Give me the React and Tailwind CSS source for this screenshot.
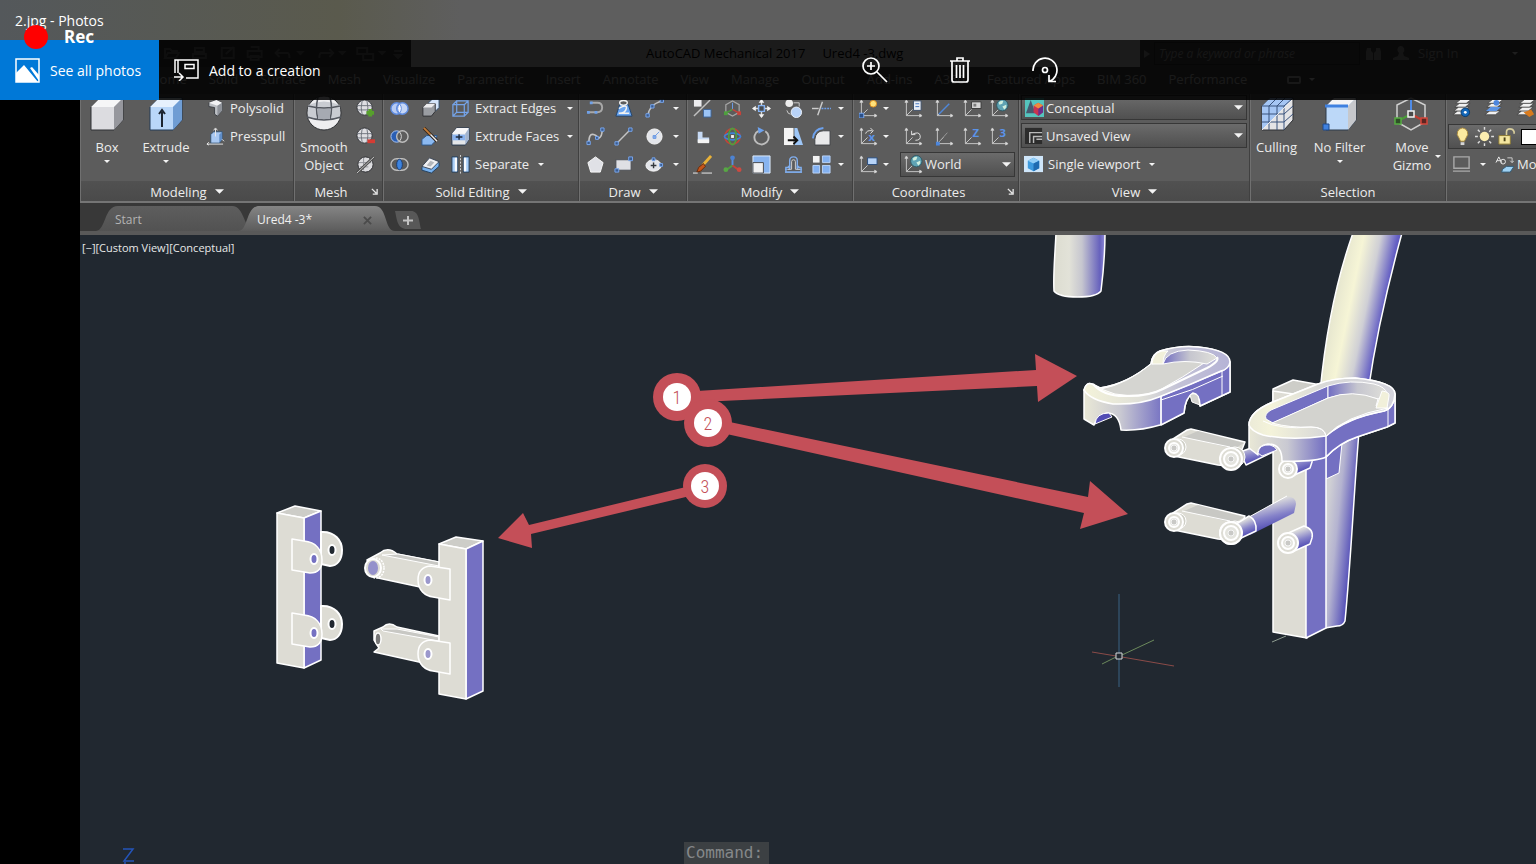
import React from 'react';
import { clsx } from 'clsx';

const MENU_TABS = [
  'Home', 'Solid', 'Surface', 'Mesh', 'Visualize', 'Parametric', 'Insert', 'Annotate', 'View',
  'Manage', 'Output', 'Add-ins', 'A360', 'Featured Apps', 'BIM 360', 'Performance'
];

const AXES = (
  <g stroke="#c9c9c9" fill="none">
    <path d="M2.5 2v15.500H18M2.500 17.500L9 11" />
    <path d="M1 3.500l1.500-2.500L4 3.500zM16.500 16l2.500 1.500-2.500 1.500z" fill="#e5e5e5" />
  </g>
);

const MESH_BALL = (
  <>
    <circle cx="9" cy="9" r="8" fill="#dedee2" stroke="#303236" />
    <path d="M1 7h16M1.500 11.500h15M6.500 1.500q-2 8 0 15M11.500 1.500q2 8 0 15" stroke="#6f747c" fill="none" />
  </>
);

const LAYER_STACK = (
  <g stroke="#3b3b3b" strokeWidth="0.700" fill="#f1f1f1">
    <path d="M1 16.500l5-4h11l-5 4z" />
    <path d="M2 12.500l5-4h11l-5 4z" />
    <path d="M3 8.500l5-4h11l-5 4z" />
    <path d="M4 4.500l5-4h11l-5 4z" />
  </g>
);

const GLOBE = (
  <>
    <circle cx="13" cy="6.500" r="6" fill="#5fa3b4" stroke="#2f5661" />
    <path d="M9 4q2-3 5-2l-1 3-3 1zM13 8l4-2q1 3-2 5z" fill="#cfeede" />
  </>
);

const ICONS = {
  polysolid: (
    <>
      <path d="M3 4l8-3 6 3v8l-5 6-3-2V9L3 8z" fill="#bcbfc4" stroke="#3c3f44" />
      <path d="M3 4l8-3 6 3-5 3z" fill="#f2f2f4" />
      <path d="M12 7l5-3v8l-5 6z" fill="#8e9299" />
    </>
  ),
  presspull: (
    <>
      <path d="M5 8l3-3h9v8l-3 4H5z" fill="#a9c9f3" stroke="#33506f" />
      <path d="M14 8l3-3v8l-3 4z" fill="#5f8dc7" />
      <path d="M10 10V2M8 3.500L10 1l2 2.500M1 18h17M3 16l-2 2 2 1M17 13l2 2" stroke="#e8e8e8" fill="none" />
    </>
  ),
  meshAdd: <>{MESH_BALL}<path d="M11 14.500h8M15 10.500v8" stroke="#57a02c" strokeWidth="4" /></>,
  meshRemove: <>{MESH_BALL}<path d="M12 15h8" stroke="#d43c34" strokeWidth="4" /></>,
  meshCrease: (
    <>
      <circle cx="10" cy="10" r="8" fill="#dcdcdf" stroke="#303236" />
      <path d="M3 8h13M4 12.500h9M8 3v13" stroke="#8f9298" />
      <path d="M1 19L19 2" stroke="#4e4e4e" strokeWidth="3" />
      <path d="M1 19L19 2" stroke="#c9c9c9" />
    </>
  ),
  union: (
    <>
      <circle cx="7" cy="10" r="6" fill="#b7cbf2" stroke="#5f8ce0" strokeWidth="1.500" />
      <circle cx="13" cy="10" r="6" fill="#c6d7f7" stroke="#5f8ce0" strokeWidth="1.500" />
      <path d="M10 5q-4 5 0 10q4-5 0-10z" fill="#f3f6ff" stroke="#5f8ce0" />
    </>
  ),
  subtract: (
    <>
      <circle cx="7" cy="10" r="6" fill="#2b5fb4" stroke="#a8c6fa" />
      <circle cx="13" cy="10" r="6" fill="#5d5d5d" stroke="#bdbdbd" strokeWidth="1.500" />
      <path d="M10 5q4 5 0 10" fill="none" stroke="#d7d7d7" />
    </>
  ),
  intersect: (
    <>
      <rect x="1" y="4" width="18" height="12" rx="6" fill="none" stroke="#bdbdbd" strokeWidth="1.500" />
      <ellipse cx="10" cy="10" rx="3" ry="5.500" fill="#3d84e0" stroke="#1c3c70" />
    </>
  ),
  interfere: (
    <>
      <path d="M8 4l4-4h7v9l-4 4H8z" fill="#d5e5fa" stroke="#33506f" />
      <path d="M2 9l4-4h9v8l-4 5H2z" fill="#9a9da2" stroke="#303236" />
      <path d="M2 9l4-4h9l-4 4z" fill="#ececee" />
    </>
  ),
  slice: (
    <>
      <path d="M1 13l5-4h11l-2 6-4 4H1z" fill="#8bb9f1" stroke="#2d578b" />
      <path d="M3 1l14 14" stroke="#33251a" strokeWidth="3.500" />
      <path d="M3 1l7 7" stroke="#c17b38" strokeWidth="2" />
      <path d="M10 8l7 7" stroke="#f0f0f0" strokeWidth="1.500" />
    </>
  ),
  thicken: (
    <>
      <path d="M1 13l8-8 10 3v4l-8 7-10-3z" fill="#76b0ee" stroke="#23405f" />
      <path d="M1 12l8-9 10 4-8 8z" fill="#f0f0f2" stroke="#3a4656" />
      <path d="M6 11l4-5 4 2-4 4z" fill="#b3b6bb" />
    </>
  ),
  extractEdges: (
    <path d="M2 6h12v12H2zM6 2h12v12H6zM2 6l4-4M14 6l4-4M14 18l4-4M2 18l4-4" fill="none" stroke="#74a3e8" strokeWidth="1.300" />
  ),
  extrudeFaces: (
    <>
      <path d="M1 7l5-6h13v12l-4 6H1z" fill="#e3e5e8" stroke="#24364e" />
      <path d="M1 7l5-6h13l-4 6z" fill="#f6f6f8" />
      <path d="M1.500 8H15v6H1.500z" fill="#8ab3ef" />
      <path d="M15 7l4-6v12l-4 6z" fill="#a2b4cf" />
      <path d="M5 10.500h7M8.500 7.500v6" stroke="#1e2b3e" strokeWidth="1.500" />
    </>
  ),
  separate: (
    <>
      <path d="M1 2h6v16H1zM13 2h6v16h-6z" fill="#a7cdf8" stroke="#24405f" />
      <path d="M4 3h2.500v14H4zM13.500 3H16v14h-2.500z" fill="#f6f9fd" />
      <path d="M10 0v20" stroke="#d9d9d9" strokeDasharray="2 1.500" />
    </>
  ),
  polyline: (
    <>
      <path d="M2 14h10q5 0 5-5t-5-5H5" fill="none" stroke="#a8a8a8" strokeWidth="2" />
      <path d="M1 12.500h3v3H1zM9 12.500h3v3H9zM4 2.500h3v3H4z" fill="#6fa1ea" />
    </>
  ),
  helix: (
    <>
      <path d="M6 6h9l4 12H2z" fill="#69a4ef" stroke="#22446e" />
      <ellipse cx="10" cy="4" rx="4" ry="2.500" fill="none" stroke="#eeeeee" strokeWidth="1.500" />
      <path d="M5 10q9-5 8 0t-8 5h11" fill="none" stroke="#f1f1f1" strokeWidth="1.500" />
    </>
  ),
  arc: (
    <>
      <path d="M3 18Q4 6 18 2" fill="none" stroke="#c0c0c0" strokeWidth="1.500" />
      <path d="M1 15.500h3.500V19H1zM6 6h3.500v3.500H6zM16 0h3.500v3.500H16z" fill="#3b5c8e" stroke="#78a8f0" />
    </>
  ),
  spline: (
    <>
      <path d="M3 17Q3 6 8 8t5 4q4-1 4-9" fill="none" stroke="#c4c4c4" strokeWidth="1.700" />
      <path d="M1 15h3.500v3.500H1zM15.500 1H19v3.500h-3.500zM10 10h3v3h-3z" fill="#3b5c8e" stroke="#78a8f0" />
    </>
  ),
  line: (
    <>
      <path d="M3 17L17 3" stroke="#c4c4c4" strokeWidth="1.500" />
      <path d="M1 15.500h3.500V19H1zM15.500 1H19v3.500h-3.500z" fill="#3b5c8e" stroke="#78a8f0" />
    </>
  ),
  circle: (
    <>
      <circle cx="10" cy="10" r="8" fill="#e3e5ea" stroke="#f8f8f8" />
      <path d="M10 10l5-5M8.500 9h3v3h-3z" stroke="#6b99e3" fill="#8ab2ee" />
    </>
  ),
  polygon: <path d="M10 2l8 6-3 10H5L2 8z" fill="#e0e1e6" stroke="#fafafa" />,
  rectangle: (
    <>
      <path d="M2 5h16v11H2z" fill="#dfe0e4" stroke="#4c4f54" />
      <path d="M1 14.500h4V18H1zM15.500 2h4v4h-4z" fill="#3b5c8e" stroke="#78a8f0" />
    </>
  ),
  ellipse: (
    <>
      <ellipse cx="9" cy="11" rx="8" ry="6" fill="#e3e5ea" stroke="#fafafa" />
      <path d="M6 11h6M9 8v6" stroke="#33373d" strokeWidth="1.500" />
      <path d="M7.500 3h3v3h-3zM15.500 9h3v3h-3z" fill="#3b5c8e" stroke="#78a8f0" />
    </>
  ),
  alignSwitch: (
    <>
      <path d="M1 1h8v7H1z" fill="#ececee" />
      <path d="M11 11h8v8h-8z" fill="#9cc4f5" stroke="#3d6397" />
      <path d="M1 18L18 1" stroke="#c0c0c0" strokeWidth="1.500" />
    </>
  ),
  gizmo3d: (
    <>
      <path d="M3 6l7-4 7 4v8l-7 4-7-4z" fill="none" stroke="#a6a6a6" strokeWidth="1.300" />
      <path d="M10 4v7" stroke="#6c9ee8" />
      <path d="M10 11l-7 4" stroke="#4e9f3e" strokeWidth="1.500" />
      <path d="M10 11l7 4" stroke="#c6423a" strokeWidth="1.500" />
      <path d="M1 13h4v4H1z" fill="#4e9f3e" />
      <path d="M15 13h4v4h-4z" fill="#c6423a" />
    </>
  ),
  move: (
    <>
      <path d="M10 1v18M1 10h18" stroke="#dadada" strokeWidth="1.500" />
      <path d="M10 0l3 4H7zM10 20l3-4H7zM0 10l4-3v6zM20 10l-4-3v6z" fill="#f2f2f2" />
      <path d="M7 7h6v6H7z" fill="#46494e" stroke="#85b2f2" strokeWidth="1.500" />
    </>
  ),
  copy: (
    <>
      <circle cx="5.500" cy="4.500" r="4" fill="#ededed" />
      <circle cx="13" cy="14" r="5.500" fill="#b9d3f8" stroke="#ecf3fd" />
      <path d="M10 4h6v4M3 12q1 4 4 4" stroke="#cfcfcf" fill="none" />
    </>
  ),
  trim: (
    <>
      <path d="M0 10h7" stroke="#cccccc" strokeWidth="1.500" />
      <path d="M10 10h10" stroke="#6ea0ea" strokeWidth="1.500" strokeDasharray="2 1" />
      <path d="M6 17l5-14" stroke="#cccccc" strokeWidth="1.500" />
    </>
  ),
  elbow: (
    <>
      <path d="M5 5h5v6h7v5H5z" fill="#c6d9f4" />
      <path d="M5 13h12v4H5z" fill="#f4f4f4" />
    </>
  ),
  rotate3d: (
    <>
      <circle cx="10" cy="10" r="8" fill="none" stroke="#c0453a" strokeWidth="1.700" />
      <ellipse cx="10" cy="10" rx="8.500" ry="3.500" fill="none" stroke="#3f82d8" strokeWidth="1.700" />
      <ellipse cx="10" cy="10" rx="4" ry="8.500" fill="none" stroke="#4e9f3e" strokeWidth="1.700" />
      <path d="M8.500 8.500h3v3h-3z" fill="#f4f4f4" />
    </>
  ),
  rotate: (
    <>
      <path d="M7 4A7.500 7.500 0 1 0 14 4.500" fill="none" stroke="#bdbdbd" strokeWidth="2" />
      <path d="M6 0l7 3.500L7 7z" fill="#6da2ee" />
    </>
  ),
  stretch: (
    <>
      <path d="M0 1h10v18H0z" fill="#f4f4f4" />
      <path d="M11 1h3l6 18h-9z" fill="#9dc6f7" />
      <path d="M4 14h9M10 10l4 4-4 4" stroke="#101010" strokeWidth="2" fill="none" />
    </>
  ),
  fillet: (
    <>
      <path d="M3 19v-6q1-9 9-9h7v15z" fill="#e9e9ea" stroke="#3f4247" />
      <path d="M1 12Q2 2 12 1" fill="none" stroke="#6da2ee" strokeWidth="2" />
    </>
  ),
  brush: (
    <>
      <path d="M19 1l-9 10" stroke="#e9b238" strokeWidth="3" />
      <path d="M11 9l2 3-5 5-4 1 2-5z" fill="#c5561c" stroke="#642a0c" />
      <path d="M0 19h5M9 19h11" stroke="#f0f0f0" />
    </>
  ),
  scale3d: (
    <>
      <path d="M10 3v8" stroke="#568fdf" strokeWidth="2" />
      <path d="M10 11l-7 5" stroke="#4e9f3e" strokeWidth="2" />
      <path d="M10 11l7 5" stroke="#c6423a" strokeWidth="2" />
      <circle cx="10" cy="3" r="2.500" fill="#4d83d2" />
      <circle cx="3" cy="15.500" r="2.500" fill="#58a645" />
      <circle cx="17" cy="15.500" r="2.500" fill="#cc4a41" />
    </>
  ),
  scale: (
    <>
      <path d="M1 1h18v18H1z" fill="#88b4f0" stroke="#e2edfc" />
      <path d="M1 8h11v11H1z" fill="#f0f0f1" stroke="#45484d" />
    </>
  ),
  offset: (
    <>
      <path d="M1 18h18M1 15h5v-3H4M19 15h-5v-3h2" fill="none" stroke="#80aeee" strokeWidth="1.300" />
      <path d="M2 18v-5h4V6q0-4 4-4t4 4v7h4v5z" fill="none" stroke="#80aeee" strokeWidth="1.500" />
      <path d="M4 15h4V7q0-2 2-2t2 2v8h5" fill="none" stroke="#d2d2d2" />
    </>
  ),
  array: (
    <>
      <path d="M1 1h7v7H1z" fill="#f2f2f2" />
      <path d="M11 1h8v7h-8zM1 11h7v8H1zM11 11h8v8h-8z" fill="#83b1f1" stroke="#bcd5f8" />
    </>
  ),
  ucsLight: (
    <>
      {AXES}
      <path d="M0 15h5v5H0z" fill="#2b4f86" stroke="#78a8f0" />
      <circle cx="15" cy="5" r="3.500" fill="#ffe17a" stroke="#e09020" />
    </>
  ),
  ucsNamed: <>{AXES}<path d="M10 2h8v10h-8z" fill="#e9eef6" stroke="#3f5068" /><path d="M12 5h4M12 8h4" stroke="#3f72bd" /></>,
  ucsPlain: <>{AXES}<path d="M4 16L15 5" stroke="#4f87da" strokeWidth="1.500" /></>,
  ucsView: <>{AXES}<path d="M9 3h10v7H9z" fill="#d5d5d5" stroke="#3a3a3a" /><path d="M11 5h3v3h-3z" fill="#7d7d7d" /></>,
  ucsWorld: <>{AXES}{GLOBE}</>,
  ucsPrevious: <>{AXES}<path d="M8 8q8-4 9 1t-5 5M8 4v4h4" fill="none" stroke="#e2e2e2" /></>,
  ucsOrigin: <>{AXES}<path d="M1 15.500h4v4H1z" fill="#4b87df" /><path d="M4 16L13 6" stroke="#9a9a9a" /></>,
  ucsObject: <>{AXES}<path d="M9 3h10v7H9z" fill="#b6d3f8" stroke="#2a4d7c" /></>,
  visualStyle: (
    <>
      <path d="M0 0h20v20H0z" fill="#55c4bd" />
      <path d="M6 2l5 14H1z" fill="#475a70" />
      <path d="M9 8l5-3 5 3v7l-5 4-5-4z" fill="#c93450" />
      <path d="M14 11l5-3v7l-5 4z" fill="#6c2d8d" />
      <path d="M9 8l5-3 5 3-5 3z" fill="#f08a3c" />
    </>
  ),
  namedView: (
    <>
      <path d="M0 2h18v17H0z" fill="#2c2c2c" />
      <path d="M5 18V7h13M9 18v-7h9M12 14h6" stroke="#b9b9b9" strokeWidth="1.500" fill="none" />
    </>
  ),
  viewport: (
    <>
      <path d="M0 1h20v17H0z" fill="#cfe6fa" />
      <path d="M4 6l6-3 6 3v8l-6 3-6-3z" fill="#3d9ade" />
      <path d="M4 6l6-3 6 3-6 3z" fill="#91cdf6" />
      <path d="M10 9l6-3v8l-6 3z" fill="#1e6bb1" />
    </>
  ),
  layerProps: <>{LAYER_STACK}<circle cx="14" cy="14" r="4.500" fill="#1266b8" stroke="#0a3a6c" /><circle cx="14" cy="14" r="1.500" fill="#ffffff" /></>,
  layerMatch: (
    <>
      {LAYER_STACK}
      <path d="M2 12.500l5-4h11l-5 4z" fill="#5b93e4" />
      <circle cx="13" cy="4" r="3" fill="#4c86de" />
    </>
  ),
  layerFreeze: <>{LAYER_STACK}<path d="M8 14l8-3 3 5-5 3z" fill="#d97b1e" /></>,
  bulb: (
    <>
      <path d="M10 1a6 6 0 0 1 4 10l-2 4H8l-2-4a6 6 0 0 1 4-10z" fill="#fbeaa0" stroke="#a8893f" />
      <path d="M8 16h4v3H8z" fill="#d5d5d5" />
    </>
  ),
  sun: (
    <>
      <circle cx="10" cy="10" r="5" fill="#fbedb0" />
      <path d="M10 0v3M10 17v3M0 10h3M17 10h3M3 3l2 2M15 15l2 2M3 17l2-2M15 5l2-2" stroke="#dddddd" strokeWidth="1.500" />
    </>
  ),
  lock: (
    <>
      <path d="M10 9V5q0-3 3.500-3T18 5v2" fill="none" stroke="#d9cf9d" strokeWidth="1.700" />
      <path d="M2 9h12v9H2z" fill="#f4e6a0" stroke="#8c7a35" />
      <path d="M8 11v4" stroke="#4b4217" strokeWidth="2" />
    </>
  ),
  layerState: <path d="M2 2h16v12H2zM1 17h18" fill="none" stroke="#a9a9a9" strokeWidth="1.500" />,
  layerWalk: (
    <>
      <path d="M8 15l4-3h8l-4 6H7z" fill="#9fd2f4" stroke="#315d79" />
      <path d="M1 8l3-6 3 6M2 6h4" stroke="#ededed" fill="none" />
      <circle cx="8.500" cy="7" r="2.500" fill="none" stroke="#ededed" />
      <path d="M13 3h5v5M16 6l2 2 2-2" stroke="#cfcfcf" fill="none" />
    </>
  )
};

// the "x", "Z" and "3" rotations of the coordinate system share one drawing
function AxisIcon({ letter }) {
  return (
    <svg viewBox="0 0 20 20" className="h-[19px] w-[19px] shrink-0 overflow-visible">
      {AXES}
      <text x="10" y={letter === 'x' ? 15 : 10} fill="#5b93e8" className="font-['Open_Sans',sans-serif] text-[12px] font-bold">{letter}</text>
      {letter === 'x' && <path d="M7 7q1-4 7-3M12 1l3 3-3 3" fill="none" stroke="#e2e2e2" />}
    </svg>
  );
}

function Icon({ name }) {
  return <svg viewBox="0 0 20 20" className="h-[19px] w-[19px] shrink-0" aria-hidden="true">{ICONS[name]}</svg>;
}

function Caret({ large }) {
  return (
    <svg viewBox="0 0 10 5" aria-hidden="true" className={clsx('shrink-0', large ? 'h-[5px] w-[9px]' : 'h-[3px] w-[6px]')}>
      <path d="M0 0h10L5 5z" fill="#f4f4f4" />
    </svg>
  );
}

function IconButton({ name, letter }) {
  return (
    <button type="button" aria-label={name || `rotate ${letter}`}>
      {letter ? <AxisIcon letter={letter} /> : <Icon name={name} />}
    </button>
  );
}

function CaretButton() {
  return <button type="button" aria-label="More" className="flex h-5 items-center"><Caret /></button>;
}

function RowButton({ icon, label, caret, wide }) {
  return (
    <button type="button" className="flex h-7 items-center gap-[5px] whitespace-nowrap">
      <Icon name={icon} />
      <span className={wide ? 'w-[87px] text-left' : 'mr-1'}>{label}</span>
      {caret && <Caret />}
    </button>
  );
}

function BigButton({ label, caret, side, className, children }) {
  return (
    <button type="button" className={clsx('flex flex-col items-center leading-[18px]', className)}>
      <svg viewBox="0 0 36 36" className="mt-[2px] h-9 w-9 shrink-0" aria-hidden="true">{children}</svg>
      <span className="mt-[6px] flex items-end">
        <span className={side && 'ml-3'}>{label}</span>
        {side && <span className="mb-4 ml-1"><Caret /></span>}
      </span>
      {caret && <span className="mt-1 flex"><Caret /></span>}
    </button>
  );
}

function Panel({ title, caret, launcher, className, children }) {
  return (
    <section className={clsx('flex shrink-0 flex-col border-l border-[#707070] border-r border-r-[#404040]', className)}>
      <div className="flex h-[87px]">{children}</div>
      <footer className="flex h-5 items-center justify-center gap-2 bg-linear-to-b from-[#515151] to-[#4a4a4a] pt-px">
        <span className={launcher && 'ml-auto pl-1'}>{title}</span>
        {caret && <Caret large />}
        {launcher && (
          <button type="button" aria-label={`${title} settings`} className="mr-1 ml-auto">
            <svg viewBox="0 0 8 8" className="h-[7px] w-[7px]"><path d="M1 1l5 5M7 1v6H2" stroke="#e8e8e8" strokeWidth="1.500" fill="none" /></svg>
          </button>
        )}
      </footer>
    </section>
  );
}

function Combo({ icon, value, className }) {
  return (
    <label className={clsx('flex h-[25px] items-center gap-[2px] border border-[#373737] bg-linear-to-b from-[#6b6b6b] to-[#505050] px-[3px]', className)}>
      <Icon name={icon} />
      <select aria-label={value} className="min-w-0 flex-1 appearance-none bg-transparent outline-none">
        <option>{value}</option>
      </select>
      <span className="flex"><Caret large /></span>
    </label>
  );
}

function Ribbon() {
  return (
    <div className="flex h-[109px] shrink-0 overflow-hidden border-b-2 border-[#757575] bg-[#5c5c5c] text-[13px] leading-5 text-[#ececec]">
      <Panel title="Modeling" caret className="w-[214px]">
        <BigButton label="Box" caret className="w-[52px]">
          <path d="M2 11l9-9h23v22l-9 10H2z" fill="#dcdce0" stroke="#2f3135" />
          <path d="M2 11l9-9h23l-9 9z" fill="#f6f6f7" />
          <path d="M25 11l9-9v22l-9 10z" fill="#96979d" />
        </BigButton>
        <BigButton label="Extrude" caret className="w-[66px]">
          <path d="M2 11l9-9h23v22l-9 10H2z" fill="#b9d7f9" stroke="#233a57" />
          <path d="M2 11l9-9h23l-9 9z" fill="#e6f1fd" />
          <path d="M25 11l9-9v22l-9 10z" fill="#6f9dd4" />
          <path d="M14 31V16M11 18l3-4 3 4" stroke="#1c2530" strokeWidth="2" fill="none" />
        </BigButton>
        <div className="ml-[7px] flex flex-col">
          <RowButton icon="polysolid" label="Polysolid" />
          <RowButton icon="presspull" label="Presspull" />
        </div>
      </Panel>

      <Panel title="Mesh" launcher className="w-[89px]">
        <BigButton label={<>Smooth<br />Object</>} className="w-[58px]">
          <circle cx="18" cy="17" r="17" fill="#eeeef0" stroke="#2f3135" />
          <path d="M2 21q16 6 32 0V9q-16-7-32 0z" fill="#c9ccd2" />
          <path d="M2 10q16 4 32 0M1 21q17 6 34 0M12 1q-3 12 0 22M24 1q3 12 0 22" stroke="#555961" strokeWidth="1.500" fill="none" />
          <path d="M12 13h12v10H12z" fill="#a6aab2" />
        </BigButton>
        <div className="ml-[3px] grid grid-rows-[28px_28px_28px] items-center">
          <IconButton name="meshAdd" />
          <IconButton name="meshRemove" />
          <IconButton name="meshCrease" />
        </div>
      </Panel>

      <Panel title="Solid Editing" caret className="w-[196px]">
        <div className="grid grid-cols-[30px_33px] grid-rows-[28px_28px_28px] place-items-center">
          <IconButton name="union" />
          <IconButton name="interfere" />
          <IconButton name="subtract" />
          <IconButton name="slice" />
          <IconButton name="intersect" />
          <IconButton name="thicken" />
        </div>
        <div className="ml-1 flex flex-col">
          <RowButton icon="extractEdges" label="Extract Edges" caret wide />
          <RowButton icon="extrudeFaces" label="Extrude Faces" caret wide />
          <RowButton icon="separate" label="Separate" caret />
        </div>
      </Panel>

      <Panel title="Draw" caret className="w-[108px]">
        <div className="grid grid-cols-[30px_26px_36px_8px] grid-rows-[28px_28px_28px] place-items-center">
          <IconButton name="polyline" />
          <IconButton name="helix" />
          <IconButton name="arc" />
          <CaretButton />
          <IconButton name="spline" />
          <IconButton name="line" />
          <IconButton name="circle" />
          <CaretButton />
          <IconButton name="polygon" />
          <IconButton name="rectangle" />
          <IconButton name="ellipse" />
          <CaretButton />
        </div>
      </Panel>

      <Panel title="Modify" caret className="w-[166px]">
        <div className="grid grid-cols-[28px_33px_24px_40px_16px_24px] grid-rows-[28px_28px_28px] place-items-center">
          <IconButton name="alignSwitch" />
          <IconButton name="gizmo3d" />
          <IconButton name="move" />
          <IconButton name="copy" />
          <IconButton name="trim" />
          <CaretButton />
          <IconButton name="elbow" />
          <IconButton name="rotate3d" />
          <IconButton name="rotate" />
          <IconButton name="stretch" />
          <IconButton name="fillet" />
          <CaretButton />
          <IconButton name="brush" />
          <IconButton name="scale3d" />
          <IconButton name="scale" />
          <IconButton name="offset" />
          <IconButton name="array" />
          <CaretButton />
        </div>
      </Panel>

      <Panel title="Coordinates" launcher className="w-[166px]">
        <div className="grid grid-cols-[28px_8px_46px_17px_38px_17px] grid-rows-[28px_28px_28px] place-items-center">
          <IconButton name="ucsLight" />
          <CaretButton />
          <IconButton name="ucsNamed" />
          <IconButton name="ucsPlain" />
          <IconButton name="ucsView" />
          <IconButton name="ucsWorld" />
          <IconButton letter="x" />
          <CaretButton />
          <IconButton name="ucsPrevious" />
          <IconButton name="ucsOrigin" />
          <IconButton letter="Z" />
          <IconButton letter="3" />
          <IconButton name="ucsObject" />
          <CaretButton />
          <Combo icon="ucsWorld" value="World" className="col-span-4 ml-[10px] w-[115px] justify-self-start" />
        </div>
      </Panel>

      <Panel title="View" caret className="w-[231px]">
        <div className="flex w-full flex-col gap-[3px] pt-px pr-[2px] pl-px">
          <Combo icon="visualStyle" value="Conceptual" />
          <Combo icon="namedView" value="Unsaved View" />
          <div className="-mt-px ml-[3px]">
            <RowButton icon="viewport" label="Single viewport" caret />
          </div>
        </div>
      </Panel>

      <Panel title="Selection" className="w-[196px]">
        <BigButton label="Culling" className="w-[51px]">
          <path d="M3 10l8-8h23v22l-9 10H3z" fill="#e4e4e6" stroke="#2f3135" />
          <path d="M3 34V10l8-8h23z" fill="#a5c6f4" />
          <path d="M3 18h22l9-8M3 26h22l9-8M10 34V10l8-8M18 34V10l8-8M3 10h22v24M25 10l9-8" stroke="#39527c" fill="none" />
          <path d="M3 34L34 3" stroke="#ececec" />
        </BigButton>
        <BigButton label="No Filter" caret className="w-[75px]">
          <path d="M4 10l8-8h22v22l-8 10H4z" fill="#bcd8f8" stroke="#2d3a4b" />
          <path d="M4 10l8-8h22l-8 8z" fill="#f4f4f5" />
          <path d="M26 10l8-8v22l-8 10z" fill="#c6c8cc" />
          <path d="M3 10h23" stroke="#3f81e0" strokeWidth="3" />
          <path d="M1 28h6v6H1z" fill="#3f81e0" stroke="#1f4a8d" />
        </BigButton>
        <BigButton label={<>Move<br />Gizmo</>} side className="w-[68px]">
          <path d="M4 9l14-7 14 7v17l-14 8-14-8z" fill="none" stroke="#d0d0d0" strokeWidth="1.500" />
          <path d="M18 18V3" stroke="#4f8be6" strokeWidth="2" />
          <path d="M18 18L5 25" stroke="#4a9a38" strokeWidth="2" />
          <path d="M18 18l13 7" stroke="#c43d32" strokeWidth="2" />
          <path d="M15 15h6v6h-6z" fill="#4a4a4a" stroke="#f4f4f4" strokeWidth="1.500" />
          <path d="M2 22h6v6H2z" fill="#2f4f28" stroke="#56ad42" strokeWidth="1.500" />
          <path d="M28 22h6v6h-6z" fill="#5c2622" stroke="#d4473b" strokeWidth="1.500" />
        </BigButton>
      </Panel>

      <Panel title="" className="w-[230px]">
        <div className="flex w-full flex-col">
          <div className="ml-[5px] flex h-[30px] items-center gap-[13px] pb-[2px]">
            <IconButton name="layerProps" />
            <IconButton name="layerMatch" />
            <IconButton name="layerFreeze" />
          </div>
          <div className="ml-px flex h-[25px] items-center gap-[3px] border border-[#373737] bg-linear-to-b from-[#6b6b6b] to-[#505050] pl-1">
            <IconButton name="bulb" />
            <IconButton name="sun" />
            <IconButton name="lock" />
            <span className="ml-[2px] h-4 w-10 border border-black bg-white" />
          </div>
          <div className="ml-[5px] flex h-[30px] items-center gap-[9px] whitespace-nowrap">
            <IconButton name="layerState" />
            <CaretButton />
            <button type="button" className="flex items-center gap-[3px]">
              <Icon name="layerWalk" />
              Mo
            </button>
          </div>
        </div>
      </Panel>
    </div>
  );
}

function AppHeader() {
  return (
    <>
      <div className="flex h-[27px] shrink-0 items-center bg-[#4c4c4c] text-[13px]">
        <div className="flex h-full w-[331px] shrink-0 items-center gap-[13px] bg-[#383838] pl-[82px]">
          <svg viewBox="0 0 250 20" className="h-5 w-[250px]" fill="none" stroke="#747474" strokeWidth="2" aria-hidden="true">
            <path d="M3 14V5h5l2 2h6M3 14l3-5h11l-3 5zM33 4h9v4h-9zM31 10h13v4H31zM60 4h12v10H60zM64 10l8-7M86 7h14v6H86zM89 3h8v4M89 12h8v4h-8zM114 9h12q2 0 2 5M118 5l-4 4 4 4M172 9h-12q-2 0-2 5M168 5l4 4-4 4M196 4h10v6h-10zM202 10h10v6h-10z" />
            <path d="M137 8h4l-2 2zM179 8h4l-2 2zM219 8h4l-2 2zM233 7h8M234 11h6l-3 3z" />
          </svg>
        </div>
        <div className="flex h-full w-[729px] shrink-0 items-center gap-[17px] bg-[#dcdcdc] pl-[235px] whitespace-pre text-black">
          <span>AutoCAD Mechanical 2017</span>
          <span>Ured4 -3.dwg</span>
        </div>
        <svg viewBox="0 0 6 8" className="mx-1 h-2 w-[6px] shrink-0"><path d="M0 0l6 4-6 4z" fill="#a5a5a5" /></svg>
        <input
          aria-label="Search help"
          placeholder="Type a keyword or phrase"
          className="h-[23px] w-[206px] shrink-0 border border-[#303030] bg-[#4c4c4c] pl-1 text-[12px] italic placeholder:text-[#b0b0b0]"
        />
        <svg viewBox="0 0 50 20" className="ml-1 h-5 w-[50px] shrink-0" fill="#a5a5a5" aria-hidden="true">
          <path d="M3 4h4v3l2 2v7H2V8zM12 4h4l1 4v8h-7V9l2-2zM36 2a4 4 0 0 1 3 7l1 3 5 2v2H29v-2l5-2 1-3a4 4 0 0 1 1-7z" />
        </svg>
        <button type="button" className="ml-1 text-[#b5b5b5]">Sign In</button>
        <span className="ml-[54px]"><Caret /></span>
      </div>
      <nav className="flex h-[27px] shrink-0 items-center gap-[22px] overflow-hidden bg-[#4c4c4c] pb-[2px] pl-[70px] text-[13px] whitespace-nowrap text-[#d4d4d4]">
        {MENU_TABS.map((tab) => (
          <button key={tab} type="button">{tab}</button>
        ))}
        <span className="ml-[18px] flex items-center gap-2">
          <span className="h-2 w-[14px] rounded-xs border-2 border-[#c4c4c4]" />
          <Caret />
        </span>
      </nav>
    </>
  );
}

function DocumentTabs() {
  return (
    <div className="flex h-8 shrink-0 items-end border-b-4 border-[#595959] bg-[#383838] pl-4 text-[12px] leading-4">
      <button type="button" className="relative h-[25px] w-[158px] pt-[3px] pl-[19px] text-left text-[#b4b4b4]">
        <svg viewBox="0 0 158 25" preserveAspectRatio="none" className="absolute inset-0 h-full w-full">
          <path d="M0 25C10 24 8 0 22 0h114c13 0 12 25 22 25z" fill="url(#tabIdle)" />
        </svg>
        <span className="relative">Start</span>
      </button>
      <div className="relative -ml-[15px] flex h-[25px] w-[156px] items-center pt-[3px] pr-[23px] pl-[18px] text-[#f0f0f0]">
        <svg viewBox="0 0 154 25" preserveAspectRatio="none" className="absolute inset-0 h-full w-full">
          <path d="M0 25C9 24 7 0 20 0h114c13 0 9 25 20 25z" fill="url(#tabActive)" />
        </svg>
        <button type="button" className="relative">Ured4 -3*</button>
        <button type="button" aria-label="Close tab" className="relative ml-auto">
          <svg viewBox="0 0 10 10" className="h-[9px] w-[9px]"><path d="M1 1l8 8M9 1L1 9" stroke="#4b4b4b" strokeWidth="2" /></svg>
        </button>
      </div>
      <button type="button" aria-label="New tab" className="mb-[2px]">
        <svg viewBox="0 0 26 18" className="h-[18px] w-[26px]">
          <path d="M0 0h16c8 0 8 10 10 18H12C2 18 2 8 0 0z" fill="#585858" />
          <path d="M13 5v9M8 9.500h10" stroke="#c2c2c2" strokeWidth="2" />
        </svg>
      </button>
    </div>
  );
}

function Gradients() {
  return (
    <defs>
      <linearGradient id="tabIdle" x2="0" y2="1">
        <stop stopColor="#5e5e5e" /><stop offset="1" stopColor="#525252" />
      </linearGradient>
      <linearGradient id="tabActive" x2="0" y2="1">
        <stop stopColor="#858585" /><stop offset="1" stopColor="#5c5c5c" />
      </linearGradient>
      <linearGradient id="tube">
        <stop stopColor="#dcdcd0" /><stop offset="0.300" stopColor="#e2e2d8" />
        <stop offset="0.550" stopColor="#c6c6cf" /><stop offset="0.900" stopColor="#6661bd" /><stop offset="1" stopColor="#8f8bd6" />
      </linearGradient>
      <linearGradient id="leg" gradientUnits="userSpaceOnUse" x1="1334" y1="300" x2="1388" y2="311">
        <stop stopColor="#e6e6cf" /><stop offset="0.300" stopColor="#f6f5d6" />
        <stop offset="0.600" stopColor="#cfcfd5" /><stop offset="0.900" stopColor="#6560c4" /><stop offset="1" stopColor="#5550ba" />
      </linearGradient>
      <linearGradient id="legLow" gradientUnits="userSpaceOnUse" x1="1325" y1="530" x2="1354" y2="533">
        <stop stopColor="#d0d0d4" /><stop offset="0.400" stopColor="#b4b3d0" /><stop offset="1" stopColor="#514cb8" />
      </linearGradient>
      <linearGradient id="trayA" gradientUnits="userSpaceOnUse" x1="1084" y1="0" x2="1165" y2="0">
        <stop stopColor="#e9e8d6" /><stop offset="0.450" stopColor="#c9c9d2" /><stop offset="1" stopColor="#716dc2" />
      </linearGradient>
      <linearGradient id="trayB" gradientUnits="userSpaceOnUse" x1="1249" y1="0" x2="1326" y2="0">
        <stop stopColor="#e9e8d6" /><stop offset="0.500" stopColor="#c9c9d2" /><stop offset="1" stopColor="#716dc2" />
      </linearGradient>
      <linearGradient id="rimA" gradientUnits="userSpaceOnUse" x1="1084" y1="0" x2="1230" y2="0">
        <stop stopColor="#f4f3da" /><stop offset="0.400" stopColor="#dfdfd8" /><stop offset="0.650" stopColor="#c3c2d6" /><stop offset="1" stopColor="#b5b3d6" />
      </linearGradient>
      <linearGradient id="rimB" gradientUnits="userSpaceOnUse" x1="1249" y1="0" x2="1395" y2="0">
        <stop stopColor="#ecebd8" /><stop offset="0.150" stopColor="#f4f3da" /><stop offset="0.500" stopColor="#d9d9d8" /><stop offset="1" stopColor="#d3d3dc" />
      </linearGradient>
      <linearGradient id="innerWall">
        <stop stopColor="#716dc2" /><stop offset="0.500" stopColor="#c6c6cf" /><stop offset="1" stopColor="#e0e0da" />
      </linearGradient>
      <linearGradient id="rod" x1="0.350" y1="0.200" x2="0.600" y2="0.900">
        <stop stopColor="#dcdcdc" /><stop offset="0.500" stopColor="#8582c9" /><stop offset="1" stopColor="#4540ae" />
      </linearGradient>
    </defs>
  );
}

function Clevis({ y }) {
  return (
    <g transform={`translate(0 ${y})`}>
      <path d="M321 532C335 531 342 541 342 550C342 560 337 566 330 566L321 564z" fill="#dddcd4" strokeWidth="2" />
      <ellipse cx="332" cy="550" rx="3.500" ry="5" fill="#212830" strokeWidth="2" />
      <path d="M292 539l12 2C316 542 322 550 322 560C322 569 318 573 310 573l-18-3z" fill="#dddcd4" />
      <ellipse cx="314" cy="559" rx="3.500" ry="5" fill="#7571c2" strokeWidth="2" />
    </g>
  );
}

function SideLug({ y }) {
  return (
    <g transform={`translate(0 ${y})`}>
      <path d="M450 569l-20-3C421 567 418 573 418 580C418 590 425 596 433 597l17 3z" fill="#dddcd4" />
      <ellipse cx="428" cy="580" rx="3.500" ry="5" fill="#9b98cc" strokeWidth="2" />
    </g>
  );
}

function Boss({ x, y, r }) {
  return (
    <g transform={`translate(${x} ${y})`}>
      <circle r={r} fill="#dddcd4" strokeWidth="2" />
      <circle r={r - 4} fill="#e4e4de" strokeWidth="2" />
      <circle r="3" fill="#c9c9c6" stroke="#f6f6f6" strokeWidth="1" />
    </g>
  );
}

function Link({ y }) {
  return (
    <g transform={`translate(0 ${y})`}>
      <path d="M1173 439l14-9 4-1 54 13-8 20-10 4-9-1-44-9z" fill="#dddcd4" />
      <path d="M1184 437l14-6 46 12-10 6z" fill="#c8c8c4" stroke="none" />
      <path d="M1182 437l48 10" strokeWidth="1" fill="none" />
      <circle cx="1178" cy="447" r="8" fill="#cfcfc6" strokeWidth="1" />
      <Boss x={1174} y={448} r={9} />
      <circle cx="1235" cy="457" r="10" fill="#cfcfc6" strokeWidth="1" />
      <Boss x={1231} y={459} r={11} />
    </g>
  );
}

function Marker({ x, y, r, label }) {
  return (
    <g>
      <circle cx={x} cy={y} r={r} fill="#c44f58" />
      <circle cx={x} cy={y} r="14" fill="#ffffff" />
      <text x={x} y={y + 7} textAnchor="middle" fill="#c44f58" className="font-['Roboto_Condensed','Open_Sans',sans-serif] text-[18px] font-light">{label}</text>
    </g>
  );
}

function Model() {
  return (
    <svg viewBox="80 235 1456 629" preserveAspectRatio="xMinYMin slice" className="h-full w-full" role="img" aria-label="3D model">
      <Gradients />
      <g stroke="#ffffff" strokeWidth="1.500" strokeLinejoin="round">
        {/* post with clevises */}
        <path d="M277 513l18-7 26 5-17 7z" fill="#cdcdc8" />
        <path d="M304 518l17-7v149l-17 8z" fill="#7470c2" />
        <path d="M277 513l27 5v150l-27-5z" fill="#dddcd4" />
        <Clevis y={0} />
        <Clevis y={74} />

        {/* post with arms */}
        <path d="M367 560l13-7q8-7 17 1l42 8v29l-19-4-42-9z" fill="#dddcd4" />
        <path d="M382 555l16-1 41 8v4z" fill="#c8c8c4" strokeWidth="1" />
        <ellipse cx="376" cy="568" rx="8" ry="10" fill="#dddcd4" strokeDasharray="2 1" />
        <ellipse cx="373" cy="568" rx="8" ry="9" fill="#dddcd4" strokeWidth="2" />
        <ellipse cx="373" cy="568" rx="5" ry="7" fill="#9491cb" stroke="none" />
        <path d="M374 631l9-4q6-6 14 0l42 9v30l-20-4-45-10 5-4-5-8z" fill="#dddcd4" />
        <path d="M381 629h16l42 8v4l-56-10z" fill="#c8c8c4" strokeWidth="1" />
        <ellipse cx="378" cy="639" rx="3" ry="6" fill="#777777" />
        <path d="M439 544l17-7 27 4-17 8z" fill="#cdcdc8" />
        <path d="M466 549l17-8v150l-17 8z" fill="#7470c2" />
        <path d="M439 544l27 5v150l-27-5z" fill="#dddcd4" />
        <SideLug y={0} />
        <SideLug y={74} />

        {/* cut tube and long leg */}
        <path d="M1056 233C1055 255 1053 275 1054 291C1060 299 1095 299 1101 291C1103 275 1105 250 1105 233z" fill="url(#tube)" />
        <path d="M1353 233C1338 275 1326 330 1320 392L1368 392C1374 350 1385 295 1402 233z" fill="url(#leg)" />
        <path d="M1325 450L1359 432C1354 490 1351 560 1345 621q-2 5-8 5l-12 2z" fill="url(#legLow)" />
        <path d="M1326 455l16-12-3 30-13 6z" fill="#7470c2" strokeWidth="1" />

        {/* left tray */}
        <path d="M1084 390Q1086 382 1092 384L1100 388Q1127 384 1151 364Q1152 354 1160 351Q1180 345 1198 347Q1230 350 1230 364V392L1200 406Q1200 394 1193 393Q1185 398 1184 413L1160 425Q1140 431 1121 430Q1119 413 1107 413Q1098 414 1094 425L1084 419z" fill="url(#trayA)" />
        <path d="M1161 396L1224 370Q1230 366 1230 362V392L1200 406Q1200 394 1193 393Q1185 398 1184 413L1161 425z" fill="#7470c2" />
        <path d="M1190 395q4-3 8 1l2 9-8-3z" fill="#d3d3cf" strokeWidth="1" />
        <path d="M1095 424Q1096 413 1109 413L1112 417z" fill="#514cb4" strokeWidth="1" />
        <path d="M1084 390Q1086 382 1092 384L1100 388Q1127 384 1151 364Q1152 354 1160 351Q1180 345 1198 347Q1230 350 1230 362Q1229 369 1221 371Q1190 385 1159 397Q1140 405 1113 404Q1090 400 1084 390z" fill="url(#rimA)" />
        <path d="M1101 389Q1127 384 1151 364Q1180 358 1204 363Q1184 377 1158 391Q1140 398 1115 394z" fill="#d5d5d1" strokeWidth="1" />
        <path d="M1163 364Q1166 351 1188 350Q1213 351 1217 358L1207 364Q1185 359 1163 364z" fill="url(#innerWall)" strokeWidth="1" />
        <path d="M1152 364Q1153 353 1162 351L1168 351Q1163 355 1163 364z" fill="#f1f0da" strokeWidth="1" />
        <path d="M1093 384Q1103 396 1124 396Q1147 397 1163 389L1207 368Q1220 361 1217 357" fill="none" strokeWidth="2" />
        <path d="M1161 396v29M1222 370v26M1161 400q32-9 62-24" fill="none" strokeWidth="1" />

        {/* pedal column */}
        <path d="M1273 389l20-9 28 5-10 14-38 4z" fill="#cdcdc8" />
        <path d="M1273 391l34 5v242l-34-6z" fill="#dddcd4" />
        <path d="M1306 440h20v188l-20 10z" fill="#7470c2" />

        {/* upper pins and link */}
        <path d="M1240 452l33-12v12l-27 13z" fill="url(#rod)" />
        <Link y={0} />
        <path d="M1286 459l22-10q6 2 4 13l-2 6-20 9z" fill="url(#rod)" />
        <Boss x={1288} y={469} r={9} />

        {/* right tray */}
        <path d="M1249 425Q1249 412 1273 402L1318 384Q1334 378 1355 378Q1395 382 1395 394V423L1387 427L1357 437Q1339 443 1326 457Q1316 462 1282 461Q1282 444 1268 444Q1257 446 1258 455L1249 448z" fill="url(#trayB)" />
        <path d="M1326 436Q1347 418 1384 411Q1394 408 1395 394V423L1387 427L1357 437Q1339 443 1326 457z" fill="#7470c2" />
        <path d="M1249 425Q1249 412 1273 402L1318 384Q1334 378 1355 378Q1395 382 1395 394Q1394 408 1384 411Q1345 418 1326 436Q1290 441 1263 435Q1251 431 1249 425z" fill="url(#rimB)" />
        <path d="M1266 419Q1264 414 1271 410L1328 386V398L1273 423z" fill="#7470c2" strokeWidth="1" />
        <path d="M1328 386Q1350 379 1374 384Q1386 387 1387 394L1378 399Q1352 390 1328 398z" fill="url(#innerWall)" strokeWidth="1" />
        <path d="M1272 423L1328 398Q1352 389 1378 399L1376 406L1388 408Q1345 416 1326 436Q1324 427 1311 427Q1290 428 1272 423z" fill="#d3d3cf" strokeWidth="1" />
        <path d="M1376 408l6-17q8 1 7 5l-2 12z" fill="#f1f0da" strokeWidth="1" />
        <path d="M1263 421Q1280 430 1311 427Q1325 427 1326 436M1388 408v18" fill="none" strokeWidth="1" />
        <path d="M1258 453Q1259 444 1270 445Q1275 446 1277 450L1262 456z" fill="#7470c2" strokeWidth="1" />

        {/* lower pins and link */}
        <path d="M1240 522l47-26q9 1 9 8l-2 9-44 22z" fill="url(#rod)" stroke="none" />
        <path d="M1240 522l47-26" fill="none" strokeWidth="1" />
        <Link y={74} />
        <path d="M1236 524l13-8q8 4 7 15l-17 8z" fill="url(#rod)" />
        <Boss x={1231} y={533} r={11} />
        <path d="M1286 534l18-8q10 3 8 12l-2 6-18 8z" fill="url(#rod)" />
        <Boss x={1288} y={543} r={10} />
      </g>

      {/* crosshair */}
      <g fill="none">
        <path d="M1119 594v59M1119 659v28" stroke="#3b6283" />
        <path d="M1102 664l14-7M1122 655l32-15" stroke="#6c8a5c" />
        <path d="M1092 652l24 4M1122 657l52 9" stroke="#8b4b48" />
        <path d="M1116 653h6v6h-6z" stroke="#d5d8db" />
        <path d="M1272 642l14-6" stroke="#8e9c90" />
        <path d="M123 849h10l-9 12h10M125 862v4" stroke="#2454b8" strokeWidth="1.500" />
      </g>

      {/* callouts */}
      <g fill="#c44f58">
        <path d="M697 391L1036 370 1035 354 1077 376 1038 402 1037 386 700 402z" />
        <path d="M725 421L1088 497 1090 481 1128 514 1080 529 1084 513 722 433z" />
        <path d="M690 486L529 525 523 513 498 538 532 548 531 534 690 496z" />
      </g>
      <Marker x={677} y={397} r={24} label="1" />
      <Marker x={708} y={423} r={24} label="2" />
      <Marker x={705} y={486} r={22} label="3" />
    </svg>
  );
}

function PhotoCommands() {
  return (
    <div className="absolute inset-x-0 top-0 z-10 flex h-[60px] bg-black/88 text-[14px] text-white">
      <button type="button" className="flex w-[159px] items-center gap-[10px] bg-[#0078d7] pl-[15px] whitespace-nowrap">
        <svg viewBox="0 0 25 25" className="h-[25px] w-[25px] shrink-0">
          <path d="M1 1h23v23H1z" fill="none" stroke="#ffffff" strokeWidth="1.500" />
          <path d="M1 15l8-8 14 17H1zM15 10l2-1 7 8v6z" fill="#ffffff" />
        </svg>
        See all photos
      </button>
      <button type="button" className="flex items-center gap-[10px] pl-[15px] whitespace-nowrap">
        <svg viewBox="0 0 25 22" className="h-[22px] w-[25px] shrink-0" fill="none" stroke="#ffffff" strokeWidth="1.500">
          <path d="M1 14V1h23v18H12M4 1v13M11 5.500h9v4h-9zM0 18h8M5 14l4 4-4 4" />
        </svg>
        Add to a creation
      </button>
      <div className="mr-[449px] ml-auto flex">
        <button type="button" aria-label="Zoom" className="flex w-[85px] items-center justify-center">
          <svg viewBox="0 0 26 26" className="h-[26px] w-[26px]" fill="none" stroke="#ffffff" strokeWidth="1.700">
            <circle cx="9" cy="9" r="8" /><path d="M15 15l10 10M9 5v8M5 9h8" />
          </svg>
        </button>
        <button type="button" aria-label="Delete" className="flex w-[85px] items-center justify-center">
          <svg viewBox="0 0 22 26" className="h-[26px] w-[22px]" fill="none" stroke="#ffffff" strokeWidth="1.700">
            <path d="M1 4h20M8 4V1h6v3M3 4v19q0 2 2 2h12q2 0 2-2V4M7.500 8v13M11 8v13M14.500 8v13" />
          </svg>
        </button>
        <button type="button" aria-label="Rotate" className="flex w-[85px] items-center justify-center">
          <svg viewBox="0 0 26 26" className="h-[26px] w-[26px]" fill="none" stroke="#ffffff" strokeWidth="1.700">
            <path d="M1 14A12 12 0 1 1 17 24.500M17 18v6.500h7" /><circle cx="13" cy="13" r="2.500" />
          </svg>
        </button>
      </div>
    </div>
  );
}

export default function App() {
  return (
    <div className="flex h-screen flex-col overflow-hidden bg-black font-['Open_Sans',sans-serif]">
      <header className="relative z-20 flex h-10 shrink-0 items-center bg-linear-to-r from-[#54585b] via-[#5a5a4d] via-22% to-[#5e5e5e] to-30% pl-[15px] text-white">
        <h1 className="text-[14px]">2.jpg - Photos</h1>
        <div className="absolute top-[25px] left-6 flex items-center gap-4 font-['Noto_Sans',sans-serif] text-[17px] leading-6 font-bold">
          <span className="h-6 w-6 rounded-full bg-[#ff0000]" />
          Rec
        </div>
      </header>

      <main className="relative flex min-h-0 flex-1 flex-col">
        <PhotoCommands />
        <div className="ml-20 flex min-h-0 flex-1 flex-col overflow-hidden">
          <AppHeader />
          <Ribbon />
          <DocumentTabs />
          <div className="relative min-h-0 flex-1 bg-[#212830]">
            <Model />
            <span className="absolute top-[5px] left-[2px] text-[11px] leading-4 text-[#e8e8e8]">[−][Custom View][Conceptual]</span>
            <input
              aria-label="Command line"
              placeholder="Command:"
              className="absolute bottom-0 left-[604px] h-[22px] w-[85px] bg-[#3c4043] pl-[2px] font-['DejaVu_Sans_Mono',monospace] text-[16px] placeholder:text-[#85888a]"
            />
          </div>
        </div>
      </main>
    </div>
  );
}
